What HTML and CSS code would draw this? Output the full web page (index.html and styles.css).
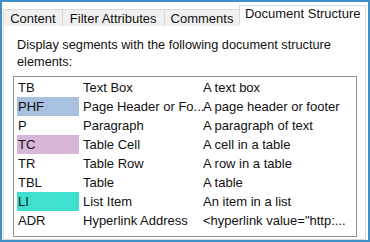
FILE: index.html
```html
<!DOCTYPE html>
<html>
<head>
<meta charset="utf-8">
<link rel="stylesheet" href="styles.css">
</head>
<body>
<div class="frame">
  <div class="tabs">
    <div class="tab tab-content">Content</div>
    <div class="tab tab-filter">Filter Attributes</div>
    <div class="tab tab-comments">Comments</div>
    <div class="tab tab-doc active">Document Structure</div>
  </div>
  <div class="panel">
    <p class="intro">Display segments with the following document structure elements:</p>
    <div class="listbox">
      <div class="row"><span class="code">TB</span><span class="name">Text Box</span><span class="desc">A text box</span></div>
      <div class="row"><span class="code hl-blue">PHF</span><span class="name">Page Header or Fo...</span><span class="desc">A page header or footer</span></div>
      <div class="row"><span class="code">P</span><span class="name">Paragraph</span><span class="desc">A paragraph of text</span></div>
      <div class="row"><span class="code hl-pink">TC</span><span class="name">Table Cell</span><span class="desc">A cell in a table</span></div>
      <div class="row"><span class="code">TR</span><span class="name">Table Row</span><span class="desc">A row in a table</span></div>
      <div class="row"><span class="code">TBL</span><span class="name">Table</span><span class="desc">A table</span></div>
      <div class="row"><span class="code hl-teal">LI</span><span class="name">List Item</span><span class="desc">An item in a list</span></div>
      <div class="row"><span class="code">ADR</span><span class="name">Hyperlink Address</span><span class="desc">&lt;hyperlink value="http:...</span></div>
    </div>
  </div>
</div>
</body>
</html>
```

FILE: styles.css
```css
html, body {
  margin: 0;
  padding: 0;
  background: #ffffff;
}

.frame {
  width: 370px;
  height: 242px;
  box-sizing: border-box;
  border: 2px solid #3f8fc6;
  background: #ffffff;
  padding: 3px 2px 0 1px;
  display: flex;
  flex-direction: column;
  font-family: "Liberation Sans", Arial, sans-serif;
  font-size: 12.75px;
  color: #111111;
}

.tabs {
  display: flex;
  align-items: flex-end;
  height: 21px;
  margin-bottom: -1px;
  position: relative;
  z-index: 1;
  font-size: 13px;
}

.tab {
  box-sizing: border-box;
  height: 17px;
  border: 1px solid #d9d9d9;
  border-bottom: none;
  background: #f0f0f0;
  line-height: 17px;
  text-align: center;
  white-space: nowrap;
  margin-right: -1px;
}

.tab-content { width: 60px; }
.tab-filter { width: 103px; }
.tab-comments { width: 77px; }

.tab.active {
  width: 127px;
  height: 21px;
  background: #ffffff;
  border-bottom: 1px solid #ffffff;
  line-height: 15px;
  margin-right: 0;
}

.panel {
  flex: 1;
  box-sizing: border-box;
  border: 1px solid #d9d9d9;
  background: #ffffff;
  padding: 10px 8px 2px 9px;
  display: flex;
  flex-direction: column;
}

.intro {
  margin: 0 0 6px 0;
  padding-left: 4px;
  line-height: 17px;
}

.listbox {
  flex: 1;
  border: 1px solid #8e9296;
  padding: 1px 0 0 3px;
  font-size: 13px;
}

.row {
  display: grid;
  grid-template-columns: 62px 124px 1fr;
  height: 19px;
  line-height: 19px;
  white-space: nowrap;
}

.code {
  padding-left: 1px;
}

.name {
  padding-left: 4px;
  overflow: hidden;
}

.hl-blue { background: #a9c1e0; }
.hl-pink { background: #d8b6d8; }
.hl-teal { background: #40e0d0; }
```
